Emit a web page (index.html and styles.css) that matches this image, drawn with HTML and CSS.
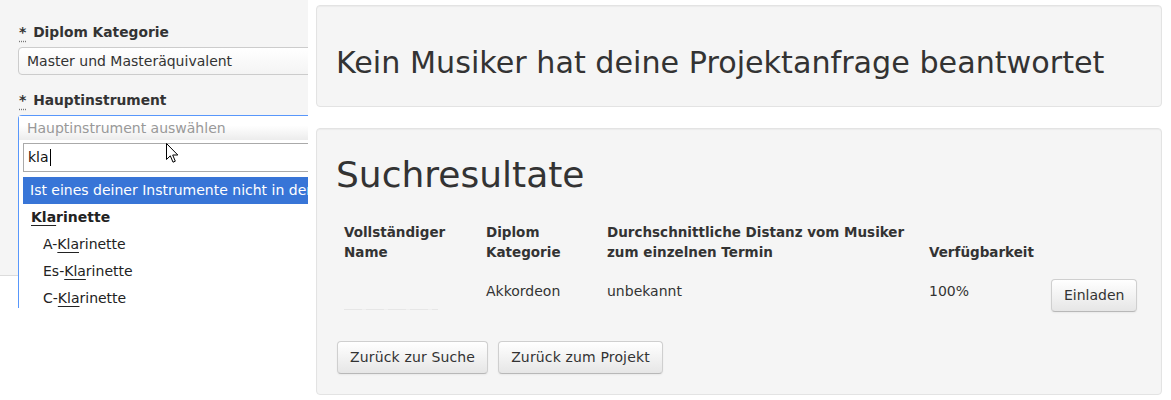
FILE: index.html
```html
<!DOCTYPE html>
<html lang="de">
<head>
<meta charset="utf-8">
<title>Suchresultate</title>
<link rel="stylesheet" href="styles.css">
</head>
<body>
<div class="left">
  <div class="form-panel">
    <div class="field-label"><abbr class="req" title="Pflichtfeld">*</abbr> Diplom Kategorie</div>
    <div class="select-box">Master und Masteräquivalent</div>
    <div class="field-label"><abbr class="req" title="Pflichtfeld">*</abbr> Hauptinstrument</div>
    <div class="s2">
      <div class="s2-choice">Hauptinstrument auswählen</div>
      <div class="s2-drop">
        <div class="s2-search"><span class="s2-typed">kla</span><span class="caret"></span></div>
        <ul class="s2-results">
          <li class="s2-opt s2-hl">Ist eines deiner Instrumente nicht in der Liste?</li>
          <li class="s2-group"><span class="match">Kla</span>rinette</li>
          <li class="s2-opt s2-child">A-<span class="match">Kla</span>rinette</li>
          <li class="s2-opt s2-child">Es-<span class="match">Kla</span>rinette</li>
          <li class="s2-opt s2-child">C-<span class="match">Kla</span>rinette</li>
        </ul>
      </div>
    </div>
  </div>
  <svg class="mouse" width="13" height="21" viewBox="0 0 13 21" aria-hidden="true">
    <path d="M0.5 0.5 L0.5 16.5 L4.3 12.8 L7 19.2 L9.3 18.2 L6.7 12 L11.8 12 Z" fill="#fff" stroke="#000" stroke-width="1" stroke-linejoin="miter"/>
  </svg>
</div>

<div class="right">
  <div class="well well-top">
    <h3 class="notice">Kein Musiker hat deine Projektanfrage beantwortet</h3>
  </div>
  <div class="well well-results">
    <h2 class="title">Suchresultate</h2>
    <table class="results">
      <thead>
        <tr>
          <th class="c-name">Vollständiger<br>Name</th>
          <th class="c-dip">Diplom<br>Kategorie</th>
          <th class="c-dist">Durchschnittliche Distanz vom Musiker<br>zum einzelnen Termin</th>
          <th class="c-avail">Verfügbarkeit</th>
          <th class="c-act"></th>
        </tr>
      </thead>
      <tbody>
        <tr>
          <td><div class="hidden-name"></div></td>
          <td>Akkordeon</td>
          <td>unbekannt</td>
          <td>100%</td>
          <td class="act"><button class="btn" type="button">Einladen</button></td>
        </tr>
      </tbody>
    </table>
    <div class="actions">
      <button class="btn" type="button">Zurück zur Suche</button>
      <button class="btn" type="button">Zurück zum Projekt</button>
    </div>
  </div>
</div>
</body>
</html>
```

FILE: styles.css
```css
* { box-sizing: border-box; }
html, body { margin: 0; padding: 0; background: #fff; }
body {
  display: flex;
  align-items: flex-start;
  font-family: "DejaVu Sans", Verdana, sans-serif;
  font-size: 14px;
  line-height: 20px;
  color: #333;
}

/* ---------- left form crop ---------- */
.left {
  position: relative;
  width: 308px;
  height: 308px;
  flex-shrink: 0;
  overflow: hidden;
}
.form-panel {
  width: 308px;
  height: 276px;
  background: #f5f5f5;
  border-bottom: 1px solid #dcdcdc;
  padding: 22px 0 0 18px;
}
.field-label {
  font-weight: bold;
  font-size: 13.8px;
  line-height: 20px;
  margin-bottom: 5px;
  white-space: nowrap;
}
.req {
  font-weight: bold;
  font-size: 14px;
  text-decoration: underline dotted #777;
  text-underline-offset: 4px;
  padding-left: 1px;
  margin-right: 2px;
}
.select-box {
  width: 420px;
  height: 28px;
  border: 1px solid #ccc;
  border-radius: 4px;
  background: linear-gradient(#ffffff, #f4f4f4);
  padding: 0 8px;
  line-height: 26px;
  margin-bottom: 15px;
  white-space: nowrap;
}
.s2 {
  width: 420px;
  border: 1px solid #5897fb;
  border-bottom: 0;
  border-radius: 4px 4px 0 0;
  background: #fff;
}
.s2-choice {
  height: 24px;
  line-height: 25px;
  padding: 0 8px;
  color: #999;
  background: linear-gradient(#ffffff 40%, #ececec);
  white-space: nowrap;
}
.s2-drop {
  background: #fff;
  padding: 3px 0 0 4px;
  height: 200px;
}
.s2-search {
  height: 29px;
  border: 1px solid #aaa;
  padding: 0 0 0 4px;
  line-height: 27px;
  color: #111;
  display: flex;
  align-items: center;
}
.caret {
  display: inline-block;
  width: 1px;
  height: 17px;
  background: #000;
  margin-left: 1px;
}
.s2-results {
  list-style: none;
  margin: 5px 0 0;
  padding: 0;
}
.s2-results li {
  height: 27px;
  line-height: 20px;
  padding: 3px 7px 4px;
  white-space: nowrap;
}
.s2-hl {
  background: #3875d7;
  color: #fff;
}
.s2-group {
  font-weight: bold;
  padding-left: 8px !important;
  color: #222;
}
.s2-child {
  padding-left: 20px !important;
  color: #222;
}
.match { text-decoration: underline; text-underline-offset: 3px; }
.mouse {
  position: absolute;
  left: 166px;
  top: 143px;
}

/* ---------- right content ---------- */
.right {
  width: 846px;
  margin-left: 8px;
  padding-top: 5px;
}
.well {
  background: #f5f5f5;
  border: 1px solid #e3e3e3;
  border-radius: 4px;
  padding: 19px;
  box-shadow: inset 0 1px 1px rgba(0,0,0,0.04);
}
.well-top {
  height: 102px;
  margin-bottom: 21px;
}
.well-results { padding-bottom: 20px; }
.notice {
  margin: 18px 0 4px;
  font-size: 30.2px;
  font-weight: normal;
  line-height: 40px;
  white-space: nowrap;
}
.title {
  margin: 7px 0 19px;
  font-size: 36px;
  font-weight: normal;
  line-height: 40px;
}
.results {
  width: 806px;
  border-collapse: collapse;
  table-layout: fixed;
}
.results th {
  text-align: left;
  vertical-align: bottom;
  font-weight: bold;
  font-size: 13.5px;
  padding: 8px 8px 8px;
  white-space: nowrap;
}
.results td {
  vertical-align: top;
  padding: 11px 8px 8px;
}
.results td.act { padding-top: 9px; }
.c-name { width: 142px; }
.c-dip { width: 121px; }
.c-dist { width: 322px; }
.c-avail { width: 122px; }
.c-act { width: 99px; }
.hidden-name {
  width: 94px;
  height: 1px;
  margin-top: 28px;
  background: repeating-linear-gradient(90deg, #e6e6e6 0 18px, #efefef 18px 22px);
}
.btn {
  font-family: "DejaVu Sans", Verdana, sans-serif;
  font-size: 14px;
  line-height: 19px;
  color: #333;
  padding: 6px 12px;
  border: 1px solid #cfcfcf;
  border-bottom-color: #b8b8b8;
  border-radius: 4px;
  background: linear-gradient(#ffffff, #e6e6e6);
  box-shadow: inset 0 1px 0 rgba(255,255,255,0.2), 0 1px 2px rgba(0,0,0,0.05);
  white-space: nowrap;
}
.actions {
  display: flex;
  gap: 10px;
  margin-top: 21px;
  padding-left: 1px;
}
.actions .btn { letter-spacing: 0.15px; }
```
